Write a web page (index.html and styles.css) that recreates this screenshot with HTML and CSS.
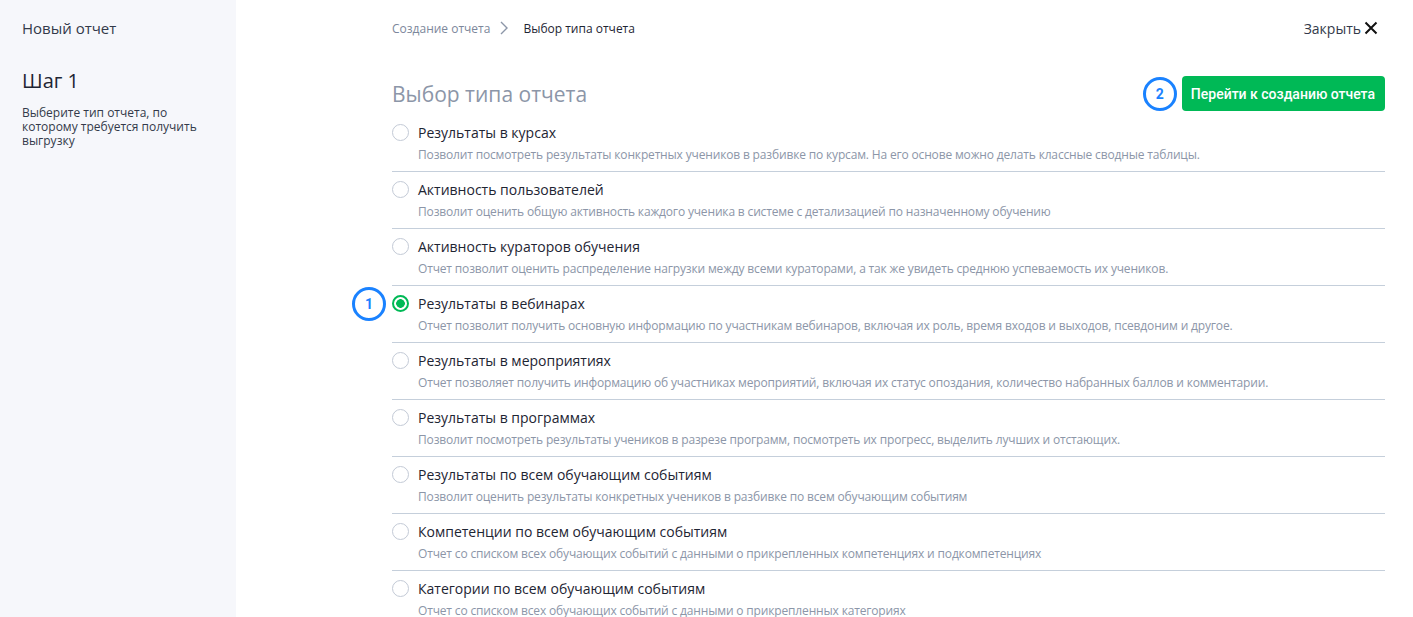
FILE: index.html
```html
<!doctype html>
<html lang="ru">
<head>
    <meta charset="UTF-8">
    <title>Новый отчет</title>
    <link rel="stylesheet" href="styles.css">
</head>
<body>
<div class="page">
    <aside class="sidebar">
        <div class="sidebar-title">Новый отчет</div>
        <div class="step">Шаг 1</div>
        <p class="step-hint">Выберите тип отчета, по которому требуется получить выгрузку</p>
    </aside>
    <main class="main">
        <div class="topbar">
            <nav class="crumbs">
                <span class="crumb">Создание отчета</span>
                <svg class="crumb-sep" width="12" height="14" viewBox="0 0 12 14"><path d="M3 1l6 6-6 6" fill="none" stroke="#8c96a8" stroke-width="1.4"/></svg>
                <span class="crumb current">Выбор типа отчета</span>
            </nav>
            <a class="close" href="#">Закрыть
                <svg width="14" height="14" viewBox="0 0 14 14"><path d="M1.5 1.5l11 11M12.5 1.5l-11 11" stroke="#111" stroke-width="2"/></svg>
            </a>
        </div>
        <div class="head">
            <h1>Выбор типа отчета</h1>
            <div class="actions">
                <span class="badge">2</span>
                <button class="btn">Перейти к созданию отчета</button>
            </div>
        </div>
        <div class="list">
            <label class="item">
                <span class="radio"></span>
                <span class="item-title">Результаты в курсах</span>
                <span class="item-desc">Позволит посмотреть результаты конкретных учеников в разбивке по курсам. На его основе можно делать классные сводные таблицы.</span>
            </label>
            <label class="item">
                <span class="radio"></span>
                <span class="item-title">Активность пользователей</span>
                <span class="item-desc">Позволит оценить общую активность каждого ученика в системе с детализацией по назначенному обучению</span>
            </label>
            <label class="item">
                <span class="radio"></span>
                <span class="item-title">Активность кураторов обучения</span>
                <span class="item-desc">Отчет позволит оценить распределение нагрузки между всеми кураторами, а так же увидеть среднюю успеваемость их учеников.</span>
            </label>
            <label class="item">
                <span class="badge badge-side">1</span>
                <span class="radio checked"></span>
                <span class="item-title">Результаты в вебинарах</span>
                <span class="item-desc">Отчет позволит получить основную информацию по участникам вебинаров, включая их роль, время входов и выходов, псевдоним и другое.</span>
            </label>
            <label class="item">
                <span class="radio"></span>
                <span class="item-title">Результаты в мероприятиях</span>
                <span class="item-desc">Отчет позволяет получить информацию об участниках мероприятий, включая их статус опоздания, количество набранных баллов и комментарии.</span>
            </label>
            <label class="item">
                <span class="radio"></span>
                <span class="item-title">Результаты в программах</span>
                <span class="item-desc">Позволит посмотреть результаты учеников в разрезе программ, посмотреть их прогресс, выделить лучших и отстающих.</span>
            </label>
            <label class="item">
                <span class="radio"></span>
                <span class="item-title">Результаты по всем обучающим событиям</span>
                <span class="item-desc">Позволит оценить результаты конкретных учеников в разбивке по всем обучающим событиям</span>
            </label>
            <label class="item">
                <span class="radio"></span>
                <span class="item-title">Компетенции по всем обучающим событиям</span>
                <span class="item-desc">Отчет со списком всех обучающих событий с данными о прикрепленных компетенциях и подкомпетенциях</span>
            </label>
            <label class="item">
                <span class="radio"></span>
                <span class="item-title">Категории по всем обучающим событиям</span>
                <span class="item-desc">Отчет со списком всех обучающих событий с данными о прикрепленных категориях</span>
            </label>
        </div>
    </main>
</div>
</body>
</html>
```

FILE: styles.css
```css
*
{
    box-sizing: border-box;
    font-family: "Open Sans", "Noto Sans", sans-serif;
}

body
{
    margin: 0;
    background: #fff;
    color: #1e2533;
    overflow: hidden;
}

.page
{
    display: flex;
    min-height: 617px;
}

/* левая колонка */
.sidebar
{
    width: 236px;
    flex-shrink: 0;
    background: #f6f7fb;
    padding: 17px 22px;
}

.sidebar-title
{
    font-size: 15px;
    line-height: 22px;
    color: #333a4a;
}

.step
{
    margin-top: 29px;
    font-size: 20px;
    line-height: 26px;
    color: #1e2533;
}

.step-hint
{
    margin: 12px 0 0;
    width: 180px;
    font-size: 12px;
    line-height: 14px;
    color: #333a4a;
}

/* основная часть */
.main
{
    flex: 1;
    padding: 18px 28px 0 156px;
}

.topbar
{
    display: flex;
    justify-content: space-between;
    align-items: center;
    height: 20px;
}

.crumbs
{
    display: flex;
    align-items: center;
    gap: 8px;
    font-size: 12px;
}

.crumb
{
    color: #7c879b;
}

.crumb.current
{
    color: #1e2533;
}

.crumb-sep
{
    margin: 0 5px 0 0;
}

.close
{
    display: flex;
    align-items: center;
    gap: 3px;
    margin-right: 7px;
    font-size: 14px;
    color: #333a4a;
    text-decoration: none;
}

.head
{
    display: flex;
    justify-content: space-between;
    align-items: center;
    margin-top: 38px;
    height: 35px;
}

h1
{
    margin: 0;
    font-size: 21px;
    font-weight: 400;
    line-height: 30px;
    color: #8c96a8;
}

.actions
{
    display: flex;
    align-items: center;
    gap: 5px;
}

.btn
{
    height: 35px;
    padding: 0 10px 0 9px;
    border: none;
    border-radius: 4px;
    background: #00b956;
    color: #fff;
    font-family: Roboto, sans-serif;
    font-size: 14px;
    font-weight: 500;
}

.badge
{
    display: flex;
    align-items: center;
    justify-content: center;
    width: 34px;
    height: 34px;
    border: 3px solid #1a82ff;
    border-radius: 50%;
    background: #fff;
    color: #1a82ff;
    font-family: Roboto, sans-serif;
    font-size: 14px;
    font-weight: 700;
}

.badge-side
{
    position: absolute;
    left: -40px;
    top: 1px;
}

.list
{
    margin-top: 4px;
}

.item
{
    position: relative;
    display: grid;
    grid-template-columns: 26px 1fr;
    padding: 8px 0 7px;
    border-bottom: 1px solid #c5cfdb;
}

.item:last-child
{
    border-bottom: none;
}

.radio
{
    width: 17px;
    height: 17px;
    margin-top: 1px;
    border: 1px solid #c3cad6;
    border-radius: 50%;
    background: #fff;
}

.radio.checked
{
    border: 2px solid #00b956;
    background: radial-gradient(circle, #00b956 0 4px, #fff 4.6px);
}

.item-title
{
    font-size: 14px;
    line-height: 20px;
    color: #1e2533;
}

.item-desc
{
    grid-column: 2;
    margin-top: 3px;
    font-size: 12px;
    line-height: 18px;
    letter-spacing: -0.16px;
    color: #8c96a8;
}
```
